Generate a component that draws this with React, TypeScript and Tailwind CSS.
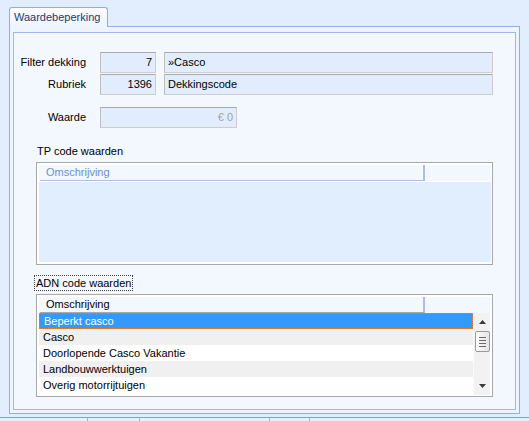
import React from "react";

const font = { fontFamily: '"Liberation Sans", Arial, sans-serif' };

function Field({ value, width, align = "left", muted = false }: { value: string; width: string; align?: "left" | "right"; muted?: boolean }) {
  return (
    <div
      className={`${width} h-[21px] flex items-center border border-[#cdcdcd] border-t-[#a9a9a9] border-l-[#bdbdbd] bg-[#e1edfd] px-[3px] ${
        align === "right" ? "justify-end" : "justify-start"
      } ${muted ? "text-[#a3a3a3]" : "text-black"}`}
    >
      {value}
    </div>
  );
}

const rows = ["Beperkt casco", "Casco", "Doorlopende Casco Vakantie", "Landbouwwerktuigen", "Overig motorrijtuigen"];

function ListHeader({ muted }: { muted?: boolean }) {
  return (
    <div className="flex h-[16px] bg-[#f3f7fe]">
      <div
        className={`ml-[1px] w-[385px] flex items-center pl-[6px] border-b border-r-2 ${
          muted ? "text-[#6a90cf] border-[#a9c0e0]" : "text-black border-b-[#a8a8a8] border-r-[#a9c0e0]"
        }`}
      >
        Omschrijving
      </div>
      <div className="flex-1" />
    </div>
  );
}

export default function App() {
  return (
    <div className="w-[529px] h-[421px] bg-[#e2edfd] flex flex-col text-[11px] overflow-hidden" style={font}>
      {/* tab */}
      <div className="pt-[7px] pl-[9px] flex">
        <div className="relative z-10 -mb-px w-[99px] h-[20px] rounded-t-[3px] border border-b-0 border-[#8eaedd] bg-gradient-to-b from-[#fbfcff] to-[#eef4fd] flex items-center pl-[4px] text-[#1c3a6e]">
          Waardebeperking
        </div>
      </div>

      {/* tab page */}
      <div className="ml-[9px] w-[511px] h-[389px] border border-[#8fb1e2] bg-[#eef4fd] pt-[5px] pl-[3px] pr-[3px] pb-[3px]">
        <div className="w-full h-full border border-[#9db9e4] bg-[#f3f7fe] pt-[19px]">
          {/* fields */}
          <div className="flex flex-col gap-[1px]">
            <div className="flex items-center">
              <div className="w-[72px] text-right mr-[14px] whitespace-nowrap">Filter dekking</div>
              <Field value="7" width="w-[56px]" align="right" />
              <div className="w-[8px]" />
              <Field value="»Casco" width="w-[329px]" />
            </div>
            <div className="flex items-center">
              <div className="w-[72px] text-right mr-[14px] whitespace-nowrap">Rubriek</div>
              <Field value="1396" width="w-[56px]" align="right" />
              <div className="w-[8px]" />
              <Field value="Dekkingscode" width="w-[329px]" />
            </div>
          </div>
          <div className="flex items-center mt-[12px]">
            <div className="w-[72px] text-right mr-[14px] whitespace-nowrap">Waarde</div>
            <Field value="€ 0" width="w-[137px]" align="right" muted />
          </div>

          {/* TP list */}
          <div className="ml-[23px] mt-[16px] h-[14px] leading-[14px]">TP code waarden</div>
          <div className="ml-[22px] mt-[4px] w-[457px] h-[103px] border border-[#a8a8a8] bg-white p-[2px] pr-[1px] flex flex-col">
            <ListHeader muted />
            <div className="h-[1px] bg-white" />
            <div className="flex-1 bg-[#e1eefe]" />
          </div>

          {/* ADN list */}
          <div className="mt-[10px] ml-[20px] w-[99px] h-[16px] border border-dotted border-[#404040] pl-[1px] leading-[14px] whitespace-nowrap">
            ADN code waarden
          </div>
          <div className="ml-[22px] mt-[3px] w-[457px] h-[103px] border border-[#a8a8a8] bg-white p-[2px] pr-[1px] flex flex-col">
            <ListHeader />
            <div className="h-[1px] bg-[#f3f7fe]" />
            <div className="flex flex-1">
              <div className="w-[434px] flex flex-col">
                {rows.map((r, i) => (
                  <div
                    key={r}
                    className={`h-[16px] flex items-center pl-[4px] ${
                      i === 0
                        ? "bg-[#3399ff] text-white border border-dotted border-[#e8842a] pl-[3px]"
                        : i % 2 === 1
                        ? "bg-[#f0f0f0] text-black"
                        : "bg-white text-black"
                    }`}
                  >
                    {r}
                  </div>
                ))}
              </div>
              {/* scrollbar */}
              <div className="w-[17px] h-[82px] bg-[#f2f2f2] border-l border-[#fafafa] flex flex-col items-center">
                <div className="h-[18px] flex items-center justify-center">
                  <svg width="7" height="4" viewBox="0 0 7 4">
                    <path d="M3.5 0L7 4H0z" fill="#3a3a3a" />
                  </svg>
                </div>
                <div className="w-[15px] h-[21px] rounded-[2px] border border-[#9a9a9a] bg-gradient-to-r from-[#fdfdfd] to-[#e4e4e4] flex flex-col items-center justify-center gap-[2px]">
                  <div className="w-[7px] h-[1px] bg-[#6a6a6a]" />
                  <div className="w-[7px] h-[1px] bg-[#6a6a6a]" />
                  <div className="w-[7px] h-[1px] bg-[#6a6a6a]" />
                  <div className="w-[7px] h-[1px] bg-[#6a6a6a]" />
                </div>
                <div className="flex-1" />
                <div className="h-[18px] flex items-center justify-center">
                  <svg width="7" height="4" viewBox="0 0 7 4">
                    <path d="M0 0H7L3.5 4z" fill="#3a3a3a" />
                  </svg>
                </div>
              </div>
            </div>
          </div>
        </div>
      </div>

      {/* bottom status strip */}
      <div className="mt-[3px] h-[4px] border-t border-[#7f9fd0] bg-[#e8f0fc] flex">
        <div className="w-[88px] border-r border-[#b0b0b0]" />
        <div className="w-[52px] border-r border-[#b0b0b0]" />
        <div className="w-[130px] border-r border-[#b0b0b0]" />
        <div className="w-[40px] border-r border-[#b0b0b0]" />
        <div className="flex-1" />
      </div>
    </div>
  );
}
